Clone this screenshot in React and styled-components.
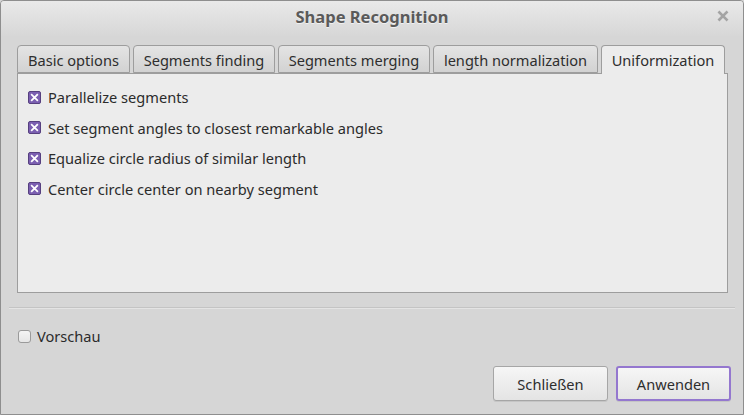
import React, { useState } from "react";
import styled, { createGlobalStyle } from "styled-components";

const Global = createGlobalStyle`
  html, body { margin: 0; padding: 0; background: #d6d6d6; }
  body { font-family: "Noto Sans", "Open Sans", sans-serif; }
  * { box-sizing: border-box; }
`;

const Window = styled.div`
  width: 744px;
  height: 415px;
  border: 1px solid #8e8e8e;
  border-radius: 4px 4px 0 0;
  background: #d6d6d6;
  display: flex;
  flex-direction: column;
  overflow: hidden;
`;

const TitleBar = styled.div`
  height: 35px;
  flex: none;
  display: flex;
  align-items: center;
  justify-content: center;
  padding-bottom: 4px;
  position: relative;
  background: linear-gradient(#e9e9e9, #d7d7d7);
`;

const Title = styled.div`
  font-size: 16.5px;
  font-weight: 700;
  color: #5a5a5a;
  text-shadow: 0 1px 0 rgba(255, 255, 255, 0.6);
`;

const CloseBtn = styled.div`
  position: absolute;
  right: 13px;
  top: 8px;
  width: 14px;
  height: 14px;
  display: flex;
  align-items: center;
  justify-content: center;
`;

const Body = styled.div`
  flex: 1;
  display: flex;
  flex-direction: column;
  padding: 9px 16px 0 16px;
`;

const TabRow = styled.div`
  display: flex;
  align-items: flex-end;
  gap: 3px;
  height: 28px;
  position: relative;
  z-index: 1;
`;

const Tab = styled.div`
  width: ${(p) => p.$w}px;
  height: ${(p) => (p.$active ? "29px" : "28px")};
  margin-bottom: ${(p) => (p.$active ? "-1px" : "0")};
  border: 1px solid #9d9d9d;
  border-bottom: ${(p) => (p.$active ? "none" : "1px solid #9d9d9d")};
  border-radius: 4px 4px 0 0;
  background: ${(p) =>
    p.$active ? "#ececec" : "linear-gradient(#e4e4e4, #d2d2d2)"};
  font-size: 14.6px;
  color: #2e2e2e;
  display: flex;
  align-items: center;
  justify-content: center;
  padding-top: ${(p) => (p.$active ? "0" : "1px")};
  white-space: nowrap;
`;

const Pane = styled.div`
  width: 711px;
  height: 220px;
  border: 1px solid #9d9d9d;
  background: #ececec;
  padding: 13px 10px;
  display: flex;
  flex-direction: column;
  gap: 10px;
`;

const OptionRow = styled.label`
  display: flex;
  align-items: center;
  gap: 7px;
  height: 20.5px;
  font-size: 14.6px;
  color: #2b2b2b;
`;

const CheckMark = styled.span`
  width: 13px;
  height: 13px;
  border-radius: 2px;
  background: #7b5fb1;
  border: 1px solid #56407f;
  display: flex;
  align-items: center;
  justify-content: center;
  flex: none;
`;

const Separator = styled.div`
  margin: 14px -8px 0 -8px;
  height: 2px;
  border-top: 1px solid #c4c4c4;
  border-bottom: 1px solid #e4e4e4;
`;

const PreviewRow = styled.label`
  display: flex;
  align-items: center;
  gap: 6px;
  margin: 17px 0 0 1px;
  font-size: 14.6px;
  color: #2b2b2b;
`;

const EmptyBox = styled.span`
  width: 13px;
  height: 13px;
  border: 1px solid #9a9a9a;
  border-radius: 3px;
  background: linear-gradient(#f4f4f4, #e6e6e6);
  flex: none;
`;

const ButtonRow = styled.div`
  display: flex;
  justify-content: flex-end;
  gap: 8px;
  margin: 20px -4px 0 0;
`;

const Button = styled.button`
  width: ${(p) => p.$w}px;
  height: 35px;
  border: ${(p) => (p.$default ? "2px solid #9477cf" : "1px solid #a6a6a6")};
  border-radius: 3px;
  background: linear-gradient(#f6f6f6, #e4e4e4);
  font-family: "Noto Sans", "Open Sans", sans-serif;
  font-size: 14.6px;
  color: #2e2e2e;
  padding: 0;
  box-shadow: 0 1px 0 rgba(0, 0, 0, 0.08);
`;

const tabs = [
  ["Basic options", 113],
  ["Segments finding", 142],
  ["Segments merging", 152],
  ["length normalization", 165],
  ["Uniformization", 124],
];

const options = [
  "Parallelize segments",
  "Set segment angles to closest remarkable angles",
  "Equalize circle radius of similar length",
  "Center circle center on nearby segment",
];

const XIcon = ({ size, color, width }) => (
  <svg width={size} height={size} viewBox="0 0 10 10">
    <path
      d="M2 2 L8 8 M8 2 L2 8"
      stroke={color}
      strokeWidth={width}
      strokeLinecap="square"
    />
  </svg>
);

export default function App() {
  const [active] = useState(4);
  return (
    <>
      <Global />
      <Window>
        <TitleBar>
          <Title>Shape Recognition</Title>
          <CloseBtn>
            <XIcon size={12} color="#a4a4a4" width={2.2} />
          </CloseBtn>
        </TitleBar>
        <Body>
          <TabRow>
            {tabs.map(([t, w], i) => (
              <Tab key={t} $w={w} $active={i === active}>
                {t}
              </Tab>
            ))}
          </TabRow>
          <Pane>
            {options.map((o) => (
              <OptionRow key={o}>
                <CheckMark>
                  <XIcon size={9} color="#ffffff" width={2} />
                </CheckMark>
                {o}
              </OptionRow>
            ))}
          </Pane>
          <Separator />
          <PreviewRow>
            <EmptyBox />
            Vorschau
          </PreviewRow>
          <ButtonRow>
            <Button $w={115}>Schließen</Button>
            <Button $w={115} $default>
              Anwenden
            </Button>
          </ButtonRow>
        </Body>
      </Window>
    </>
  );
}
